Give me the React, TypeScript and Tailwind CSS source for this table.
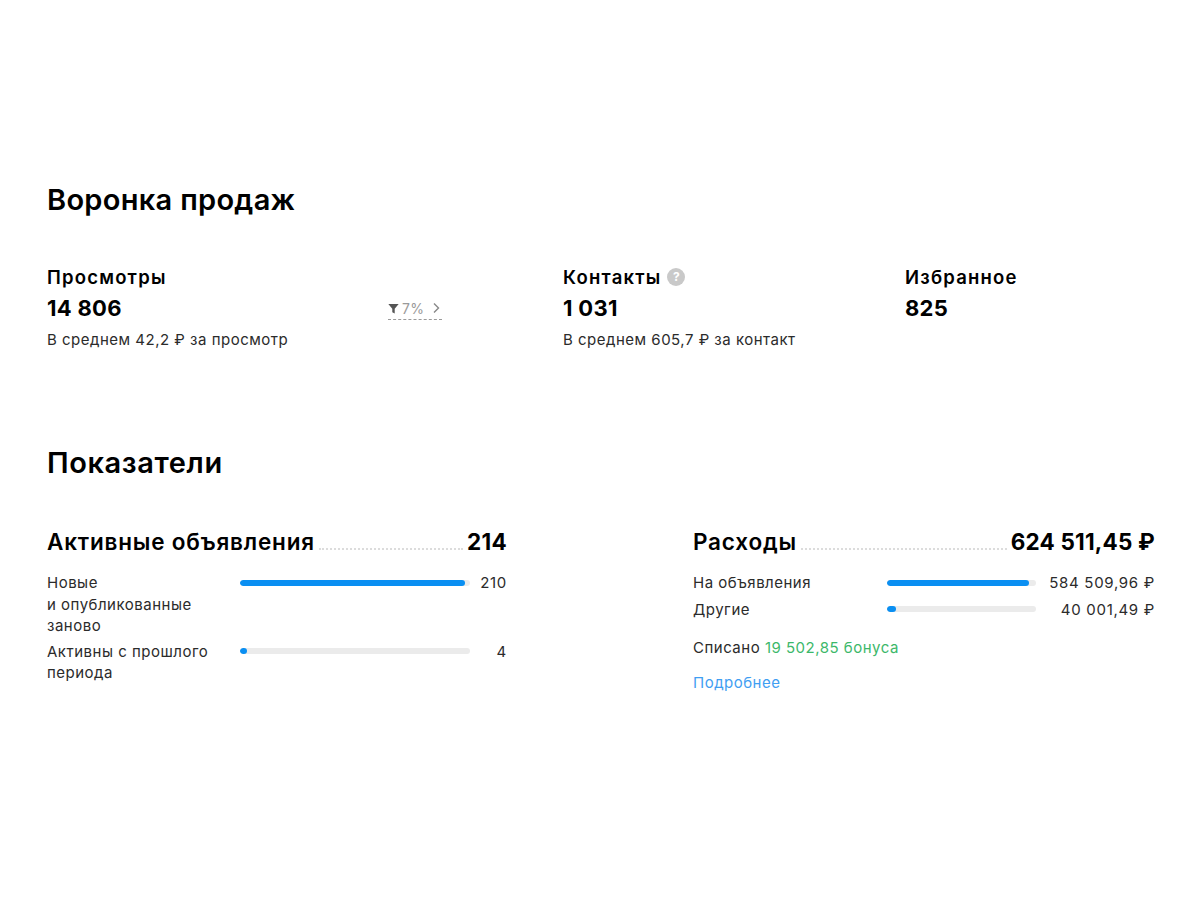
import React from "react";

interface BarRowProps {
  label: React.ReactNode;
  value: string;
  percent: number;
  cols: string;
}

const BarRow: React.FC<BarRowProps> = ({ label, value, percent, cols }) => {
  return (
    <div className={`grid ${cols} items-start`}>
      <div className="text-[15px] leading-[21.5px] tracking-[0.5px] text-[#2b2b2b]">
        {label}
      </div>
      <div className="h-[21.5px] flex items-center">
        <div className="w-full h-[6px] rounded-full bg-[#ebebeb] overflow-hidden">
          <div
            className="h-full rounded-full bg-[#0a8ff2]"
            style={{ width: `${percent}%` }}
          />
        </div>
      </div>
      <div className="text-right text-[15px] leading-[21.5px] tracking-[0.7px] text-[#2b2b2b]">
        {value}
      </div>
    </div>
  );
};

const Leader: React.FC = () => (
  <span className="flex-1 mx-1 mb-[6px] border-b-2 border-dotted border-[#dcdcdc]" />
);

const FunnelIcon = () => (
  <svg width="11" height="11" viewBox="0 0 10 10" className="mr-[1px]">
    <path d="M0.3 1h9.4L6.1 5.2v4.3L3.9 8.4V5.2z" fill="#555" />
  </svg>
);

export default function App() {
  return (
    <div
      className="min-h-[900px] bg-white pl-[47px] pr-[45px] pt-[182px] text-black"
      style={{ fontFamily: "Inter, 'Noto Sans', sans-serif" }}
    >
      <h2 className="text-[29px] leading-[36px] font-semibold tracking-[0.3px]">
        Воронка продаж
      </h2>

      {/* funnel */}
      <div className="mt-[47px] flex items-start">
        <div className="w-[516px]">
          <div className="text-[18.5px] leading-[24px] font-semibold tracking-[1.2px]">
            Просмотры
          </div>
          <div className="mt-[5px] flex items-center">
            <span className="w-[341px] text-[22px] leading-[28px] font-bold tracking-[0.3px]">
              14 806
            </span>
            <button className="mt-[4px] flex items-center gap-[2px] pb-[3px] border-b border-dashed border-[#9a9a9a] text-[14px] leading-[15px] text-[#9a9a9a]">
              <FunnelIcon />
              <span className="tracking-[0.3px]">7%</span>
              <svg width="12" height="12" viewBox="0 0 12 12" className="ml-[4px]">
                <path d="M4 1.5l4.5 4.5L4 10.5" fill="none" stroke="#888" strokeWidth="1.4" />
              </svg>
            </button>
          </div>
          <div className="mt-[8px] text-[15px] leading-[20px] tracking-[0.5px] text-[#2b2b2b]">
            В среднем 42,2 ₽ за просмотр
          </div>
        </div>

        <div className="w-[342px]">
          <div className="flex items-center gap-[6px] text-[18.5px] leading-[24px] font-semibold tracking-[1.2px]">
            Контакты
            <span className="w-[18px] h-[18px] rounded-full bg-[#c9c9c9] text-white text-[12px] leading-[18px] font-bold flex items-center justify-center tracking-normal">
              ?
            </span>
          </div>
          <div className="mt-[5px] text-[22px] leading-[28px] font-bold tracking-[0.3px]">
            1 031
          </div>
          <div className="mt-[8px] text-[15px] leading-[20px] tracking-[0.5px] text-[#2b2b2b]">
            В среднем 605,7 ₽ за контакт
          </div>
        </div>

        <div>
          <div className="text-[18.5px] leading-[24px] font-semibold tracking-[1.2px]">
            Избранное
          </div>
          <div className="mt-[5px] text-[22px] leading-[28px] font-bold tracking-[0.3px]">
            825
          </div>
        </div>
      </div>

      <h2 className="mt-[95px] text-[29px] leading-[36px] font-semibold tracking-[0.6px]">
        Показатели
      </h2>

      <div className="mt-[47px] flex justify-between">
        {/* active listings */}
        <div className="w-[460px]">
          <div className="flex items-end text-[22.5px] leading-[28px] font-semibold tracking-[0.8px]">
            <span>Активные объявления</span>
            <Leader />
            <span className="font-bold tracking-[0.3px]">214</span>
          </div>
          <div className="mt-[16px] flex flex-col gap-[4px]">
            <BarRow
              cols="grid-cols-[193px_230px_1fr]"
              label={
                <>
                  Новые
                  <br />
                  и опубликованные
                  <br />
                  заново
                </>
              }
              value="210"
              percent={98}
            />
            <BarRow
              cols="grid-cols-[193px_230px_1fr]"
              label={
                <>
                  Активны с прошлого
                  <br />
                  периода
                </>
              }
              value="4"
              percent={3}
            />
          </div>
        </div>

        {/* expenses */}
        <div className="w-[462px]">
          <div className="flex items-end text-[22.5px] leading-[28px] font-semibold tracking-[0.8px]">
            <span>Расходы</span>
            <Leader />
            <span className="font-bold tracking-[0.2px]">624 511,45 ₽</span>
          </div>
          <div className="mt-[16px] flex flex-col gap-[5px]">
            <BarRow
              cols="grid-cols-[194px_149px_1fr]"
              label="На объявления"
              value="584 509,96 ₽"
              percent={95}
            />
            <BarRow
              cols="grid-cols-[194px_149px_1fr]"
              label="Другие"
              value="40 001,49 ₽"
              percent={6}
            />
          </div>
          <div className="mt-[17px] text-[15px] leading-[21.5px] tracking-[0.5px] text-[#2b2b2b]">
            Списано <span className="text-[#3cb86a]">19 502,85 бонуса</span>
          </div>
          <a className="mt-[13px] block text-[15px] leading-[21.5px] tracking-[0.5px] text-[#3f9ef2] cursor-pointer">
            Подробнее
          </a>
        </div>
      </div>
    </div>
  );
}
